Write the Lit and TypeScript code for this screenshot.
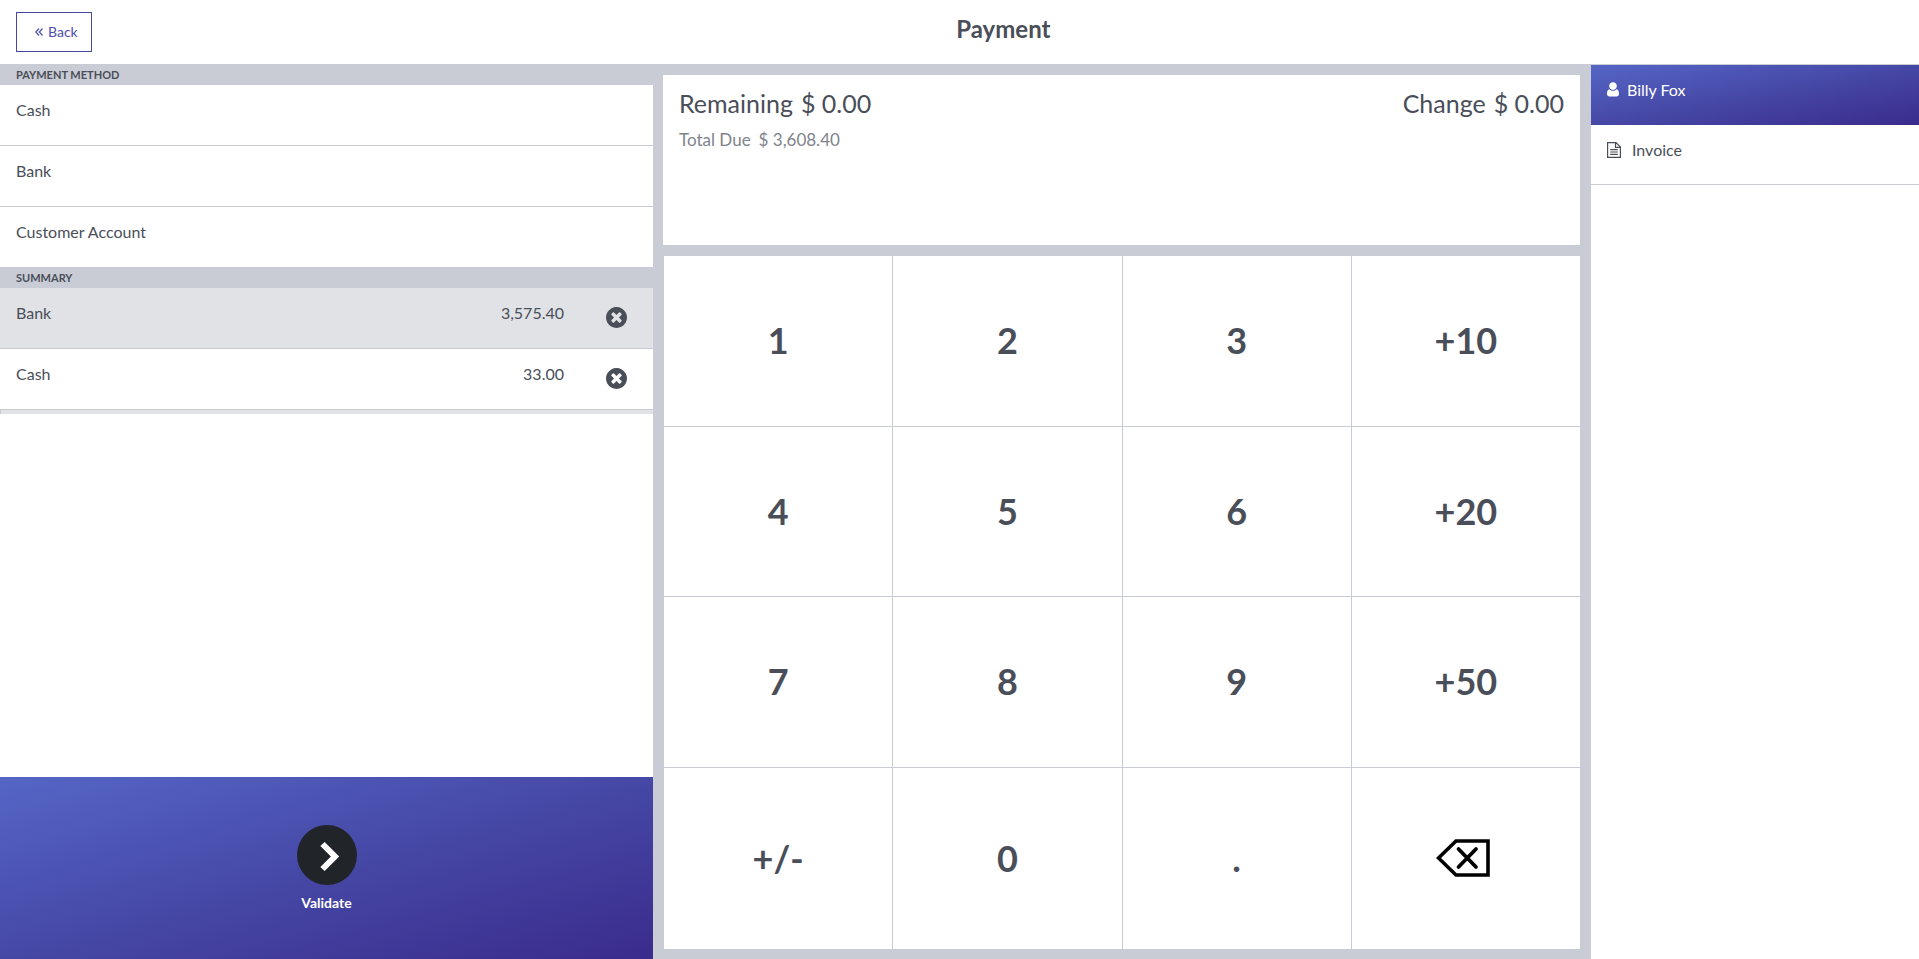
import { LitElement, html, css, svg } from "lit";
import { customElement } from "lit/decorators.js";

const backspaceIcon = svg`<svg class="backspace" viewBox="0 0 60 40" aria-hidden="true">
  <path d="M2.5 20 L20 3 H52 V37 H20 Z" fill="none" stroke="#000" stroke-width="3.6"/>
  <path d="M22.5 11 L40 29 M40 11 L22.5 29" fill="none" stroke="#000" stroke-width="3.8" stroke-linecap="round"/>
</svg>`;

const closeIcon = svg`<svg viewBox="0 0 1536 1536" width="21" height="21" aria-hidden="true">
  <path fill="currentColor" d="M1149 994q0-26-19-45l-181-181 181-181q19-19 19-45 0-27-19-46l-90-90q-19-19-46-19-26 0-45 19l-181 181-181-181q-19-19-45-19-27 0-46 19l-90 90q-19 19-19 46 0 26 19 45l181 181-181 181q-19 19-19 45 0 27 19 46l90 90q19 19 46 19 26 0 45-19l181-181 181 181q19 19 45 19 27 0 46-19l90-90q19-19 19-46zM1536 768q0 209-103 385.500t-279.500 279.500-385.500 103-385.500-103-279.500-279.500-103-385.500 103-385.500 279.500-279.500 385.500-103 385.500 103 279.500 279.500 103 385.500z"/>
</svg>`;

const METHODS = ["Cash", "Bank", "Customer Account"];
const LINES = [
  { name: "Bank", amount: "3,575.40", selected: true },
  { name: "Cash", amount: "33.00", selected: false },
];
const KEYS = ["1", "2", "3", "+10", "4", "5", "6", "+20", "7", "8", "9", "+50", "+/-", "0", ".", "back"];

@customElement("app-root")
export class AppRoot extends LitElement {
  static styles = css`
    :host {
      --line: #c9ccd4;
      --ink: #494e59;
      --brand: #4547a3;
      --gradient: linear-gradient(to bottom right, #5566c6, #4648a6 50%, #3a2b8c);
      display: flex;
      flex-direction: column;
      height: 100vh;
      box-sizing: border-box;
      overflow: hidden;
      background: #fff;
      color: var(--ink);
      font: 16px/24px Lato, sans-serif;
    }
    * { box-sizing: border-box; }
    button {
      margin: 0;
      border: 0;
      border-radius: 0;
      background: none;
      color: inherit;
      font: inherit;
      cursor: pointer;
    }
    svg { display: block; flex: none; }
    .top {
      display: grid;
      grid-template-columns: auto 1fr;
      gap: 12px;
      height: 64px;
      padding: 12px 16px;
      flex: none;
    }
    .back {
      display: flex;
      align-items: center;
      gap: 5px;
      height: 40px;
      padding: 0 13px 0 18px;
      border: 1px solid var(--brand);
      color: #4f4dae;
      font-size: 14px;
    }
    h1 { margin: 0; font-size: 24px; line-height: 34px; font-weight: 700; text-align: center; }
    .main {
      display: grid;
      grid-template-columns: 653fr 938fr 328fr;
      flex: 1;
      min-height: 0;
      background: var(--line);
    }
    .left { display: flex; flex-direction: column; background: #fff; min-width: 0; }
    h2 {
      margin: 0;
      padding: 0 16px;
      background: var(--line);
      font-size: 11px;
      line-height: 21px;
      font-weight: 700;
      text-transform: uppercase;
    }
    .list { display: flex; flex-direction: column; margin: 0; padding: 0; list-style: none; }
    .method {
      display: block;
      width: 100%;
      height: 61px;
      padding: 13px 16px 23px;
      border-bottom: 1px solid var(--line);
      text-align: left;
    }
    .list li:last-child .method { height: 60px; border-bottom: 0; }
    .line {
      display: flex;
      height: 61px;
      padding: 13px 16px;
      border-bottom: 1px solid var(--line);
    }
    .line.selected { background: #e0e2e6; }
    .amount { margin-left: auto; }
    .remove { display: flex; align-self: flex-start; margin-left: 32px; padding: 6px 10px; }
    .strip { height: 4px; background: #e0e2e6; border-left: 1px solid var(--line); }
    .validate {
      display: flex;
      flex-direction: column;
      align-items: center;
      gap: 6px;
      height: 182px;
      margin-top: auto;
      padding: 48px 16px 0;
      background: var(--gradient);
      color: #fff;
      font-size: 14px;
      font-weight: 700;
    }
    .disc {
      display: grid;
      place-items: center;
      width: 60px;
      height: 60px;
      border-radius: 50%;
      background: #212529;
    }
    .center { display: flex; flex-direction: column; gap: 11px; padding: 11px 11px 10px 10px; min-width: 0; min-height: 0; }
    .status {
      display: flex;
      justify-content: space-between;
      height: 170px;
      padding: 11px 16px;
      background: #fff;
      font-size: 25px;
      line-height: 34px;
    }
    .pair { display: flex; gap: 8px; }
    .due { margin-top: 7px; font-size: 17px; line-height: 26px; color: #80838b; }
    .keys {
      display: grid;
      grid-template-columns: repeat(4, minmax(0, 1fr));
      grid-template-rows: repeat(3, minmax(0, 17fr)) minmax(0, 18fr);
      flex: 1;
      min-height: 0;
    }
    .key {
      display: grid;
      place-items: center;
      padding: 0 0 2px;
      border-left: 1px solid var(--line);
      border-bottom: 1px solid var(--line);
      background: #fff;
      font-size: 36px;
      line-height: 44px;
      font-weight: 700;
    }
    .key:nth-child(n + 13) { border-bottom: 0; }
    .backspace { width: 60px; height: 40px; }
    .right { border-top: 1px solid var(--line); background: #fff; min-width: 0; }
    .side {
      display: flex;
      align-items: flex-start;
      width: 100%;
      height: 60px;
      padding: 13px 16px;
      text-align: left;
    }
    .side svg { margin-top: 4px; }
    .customer { gap: 8px; background: var(--gradient); color: #fff; }
    .invoice { gap: 11px; border-bottom: 1px solid var(--line); }
  `;

  render() {
    return html`
      <header class="top">
        <button class="back">
          <svg viewBox="0 0 8 8" width="8" height="8" aria-hidden="true">
            <path d="M4 .5 L.8 4 L4 7.500 M7.500 .5 L4.300 4 L7.500 7.500" fill="none" stroke="currentColor" stroke-width="1.200"/>
          </svg>
          Back
        </button>
        <h1>Payment</h1>
      </header>
      <main class="main">
        <section class="left">
          <h2>Payment method</h2>
          <ul class="list">
            ${METHODS.map((m) => html`<li><button class="method">${m}</button></li>`)}
          </ul>
          <h2>Summary</h2>
          <ul class="list">
            ${LINES.map(
              (l) => html`<li class="line ${l.selected ? "selected" : ""}">
                <span>${l.name}</span>
                <span class="amount">${l.amount}</span>
                <button class="remove" aria-label="Remove ${l.name}">${closeIcon}</button>
              </li>`
            )}
          </ul>
          <div class="strip"></div>
          <button class="validate">
            <span class="disc">
              <svg viewBox="0 0 60 60" width="60" height="60" aria-hidden="true">
                <path d="M25.500 19 L38 31.500 L25.500 44" fill="none" stroke="#fff" stroke-width="6"/>
              </svg>
            </span>
            Validate
          </button>
        </section>
        <section class="center">
          <div class="status">
            <div>
              <div class="pair"><span>Remaining</span><span>$ 0.00</span></div>
              <div class="pair due"><span>Total Due</span><span>$ 3,608.40</span></div>
            </div>
            <div class="pair"><span>Change</span><span>$ 0.00</span></div>
          </div>
          <div class="keys">
            ${KEYS.map((k) =>
              k === "back"
                ? html`<button class="key" aria-label="Backspace">${backspaceIcon}</button>`
                : html`<button class="key">${k}</button>`
            )}
          </div>
        </section>
        <aside class="right">
          <button class="side customer">
            <svg viewBox="0 0 12 15" width="12" height="15" aria-hidden="true">
              <path d="M6 .2 C8.300 .2 9.800 1.900 9.800 4 C9.800 6.200 8.300 7.900 6 7.900 C3.700 7.900 2.200 6.200 2.200 4 C2.200 1.900 3.700 .2 6 .2 Z M2.500 7.200 C3.500 8.300 4.700 8.800 6 8.800 C7.300 8.800 8.500 8.300 9.500 7.200 C11.400 7.500 12 9.500 12 11.800 C12 13.600 11 14.600 9.600 14.600 H2.400 C1 14.600 0 13.600 0 11.800 C0 9.500 .6 7.500 2.500 7.200 Z" fill="currentColor"/>
            </svg>
            Billy Fox
          </button>
          <button class="side invoice">
            <svg viewBox="0 0 14 16" width="14" height="16" aria-hidden="true">
              <path d="M.6 .6 H9 L13.400 5 V15.400 H.6 Z M8.500 .6 V5.400 H13.400 M3.200 7.600 H10.800 M3.200 10 H10.800 M3.200 12.400 H10.800" fill="none" stroke="currentColor" stroke-width="1.200"/>
            </svg>
            Invoice
          </button>
        </aside>
      </main>
    `;
  }
}
